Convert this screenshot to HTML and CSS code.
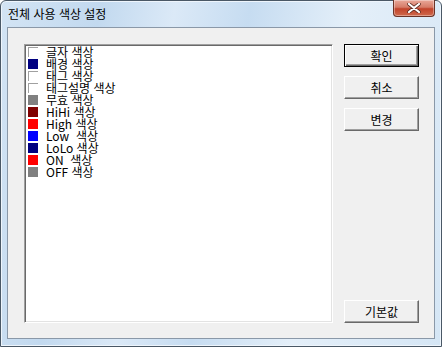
FILE: index.html
```html
<!DOCTYPE html>
<html lang="ko">
<head>
<meta charset="utf-8">
<link rel="stylesheet" href="styles.css">
</head>
<body>
<div class="window">
  <div class="titlebar">
    <span class="title">전체 사용 색상 설정</span>
    <div class="close">
      <svg width="16" height="10" viewBox="0 0 16 10"><path d="M3 1 L13 9 M13 1 L3 9" stroke="#5a2a20" stroke-width="3.6" stroke-linecap="round"/><path d="M3 1 L13 9 M13 1 L3 9" stroke="#ffffff" stroke-width="2.2" stroke-linecap="round"/></svg>
    </div>
  </div>
  <div class="client">
    <div class="listbox">
      <div class="item"><span class="sw sw-white"></span><span>글자 색상</span></div>
      <div class="item"><span class="sw" style="background:#000080"></span><span>배경 색상</span></div>
      <div class="item"><span class="sw sw-white"></span><span>태그 색상</span></div>
      <div class="item"><span class="sw sw-white"></span><span>태그설명 색상</span></div>
      <div class="item"><span class="sw" style="background:#808080"></span><span>무효 색상</span></div>
      <div class="item"><span class="sw" style="background:#800000"></span><span>HiHi 색상</span></div>
      <div class="item"><span class="sw" style="background:#ff0000"></span><span>High 색상</span></div>
      <div class="item"><span class="sw" style="background:#0000ff"></span><span>Low  색상</span></div>
      <div class="item"><span class="sw" style="background:#000080"></span><span>LoLo 색상</span></div>
      <div class="item"><span class="sw" style="background:#ff0000"></span><span>ON  색상</span></div>
      <div class="item"><span class="sw" style="background:#808080"></span><span>OFF 색상</span></div>
    </div>
    <div class="buttons">
      <button class="btn default">확인</button>
      <button class="btn">취소</button>
      <button class="btn">변경</button>
      <button class="btn last">기본값</button>
    </div>
  </div>
</div>
</body>
</html>
```
FILE: styles.css
```css
html, body {
  margin: 0;
  padding: 0;
  background: #ffffff;
}
.window {
  width: 442px;
  height: 347px;
  box-sizing: border-box;
  border: 1px solid #4a5866;
  border-radius: 6px 6px 0 0;
  background: linear-gradient(100deg, #d3e4f4 0%, #c2d9ef 20%, #dbe9f7 35%, #c6dcf1 50%, #e4eff9 70%, #d5e6f5 100%);
  display: flex;
  flex-direction: column;
  font-family: "Noto Sans CJK KR", "Noto Sans", sans-serif;
  box-shadow: inset 0 0 0 1px #eef5fc;
}
.titlebar {
  height: 26px;
  display: flex;
  align-items: flex-start;
  justify-content: space-between;
  position: relative;
}
.title {
  font-size: 12px;
  line-height: 12px;
  color: #000;
  margin: 7px 0 0 7px;
  white-space: pre;
}
.close {
  width: 42px;
  height: 17px;
  margin: -1px 6px 0 0;
  box-sizing: border-box;
  border: 1px solid #6b3327;
  border-top: none;
  border-radius: 0 0 4px 4px;
  background: linear-gradient(#e9a899 0%, #d67c68 45%, #c2432b 55%, #cf6a4c 100%);
  box-shadow: inset 0 0 0 1px rgba(255,255,255,0.35);
  display: flex;
  align-items: center;
  justify-content: center;
}
.client {
  margin: 0 6px 7px 6px;
  flex: 1;
  background: #f0f0f0;
  border: 1px solid #8a98a8;
  display: flex;
  padding: 16px 15px 0 16px;
  gap: 11px;
}
.listbox {
  width: 309px;
  height: 279px;
  box-sizing: border-box;
  background: #fff;
  border-top: 1px solid #a0a0a0;
  border-left: 1px solid #a0a0a0;
  border-right: 1px solid #ffffff;
  border-bottom: 1px solid #ffffff;
  box-shadow: inset 1px 1px 0 #696969, inset -1px -1px 0 #e3e3e3;
  padding: 1px 0 0 2px;
  font-size: 12px;
}
.item {
  height: 12px;
  line-height: 12px;
  display: flex;
  align-items: flex-start;
  white-space: pre;
  color: #000;
}
.sw {
  width: 10px;
  height: 10px;
  margin: 1px 8px 0 1px;
  flex: none;
  box-sizing: border-box;
}
.sw-white {
  background: #fff;
  border-top: 1px solid #a0a0a0;
  border-left: 1px solid #a0a0a0;
}
.buttons {
  display: flex;
  flex-direction: column;
  gap: 9px;
  height: 279px;
}
.btn {
  width: 75px;
  height: 23px;
  box-sizing: border-box;
  background: #f0f0f0;
  font-family: "Noto Sans CJK KR", "Noto Sans", sans-serif;
  font-size: 12px;
  color: #000;
  padding: 0;
  border-top: 1px solid #ffffff;
  border-left: 1px solid #ffffff;
  border-right: 1px solid #696969;
  border-bottom: 1px solid #696969;
  box-shadow: inset -1px -1px 0 #a0a0a0;
}
.btn.default {
  border: 1px solid #000;
  box-shadow: inset 1px 1px 0 #ffffff, inset -1px -1px 0 #696969, inset -2px -2px 0 #a0a0a0;
}
.btn.last {
  margin-top: auto;
}
```
